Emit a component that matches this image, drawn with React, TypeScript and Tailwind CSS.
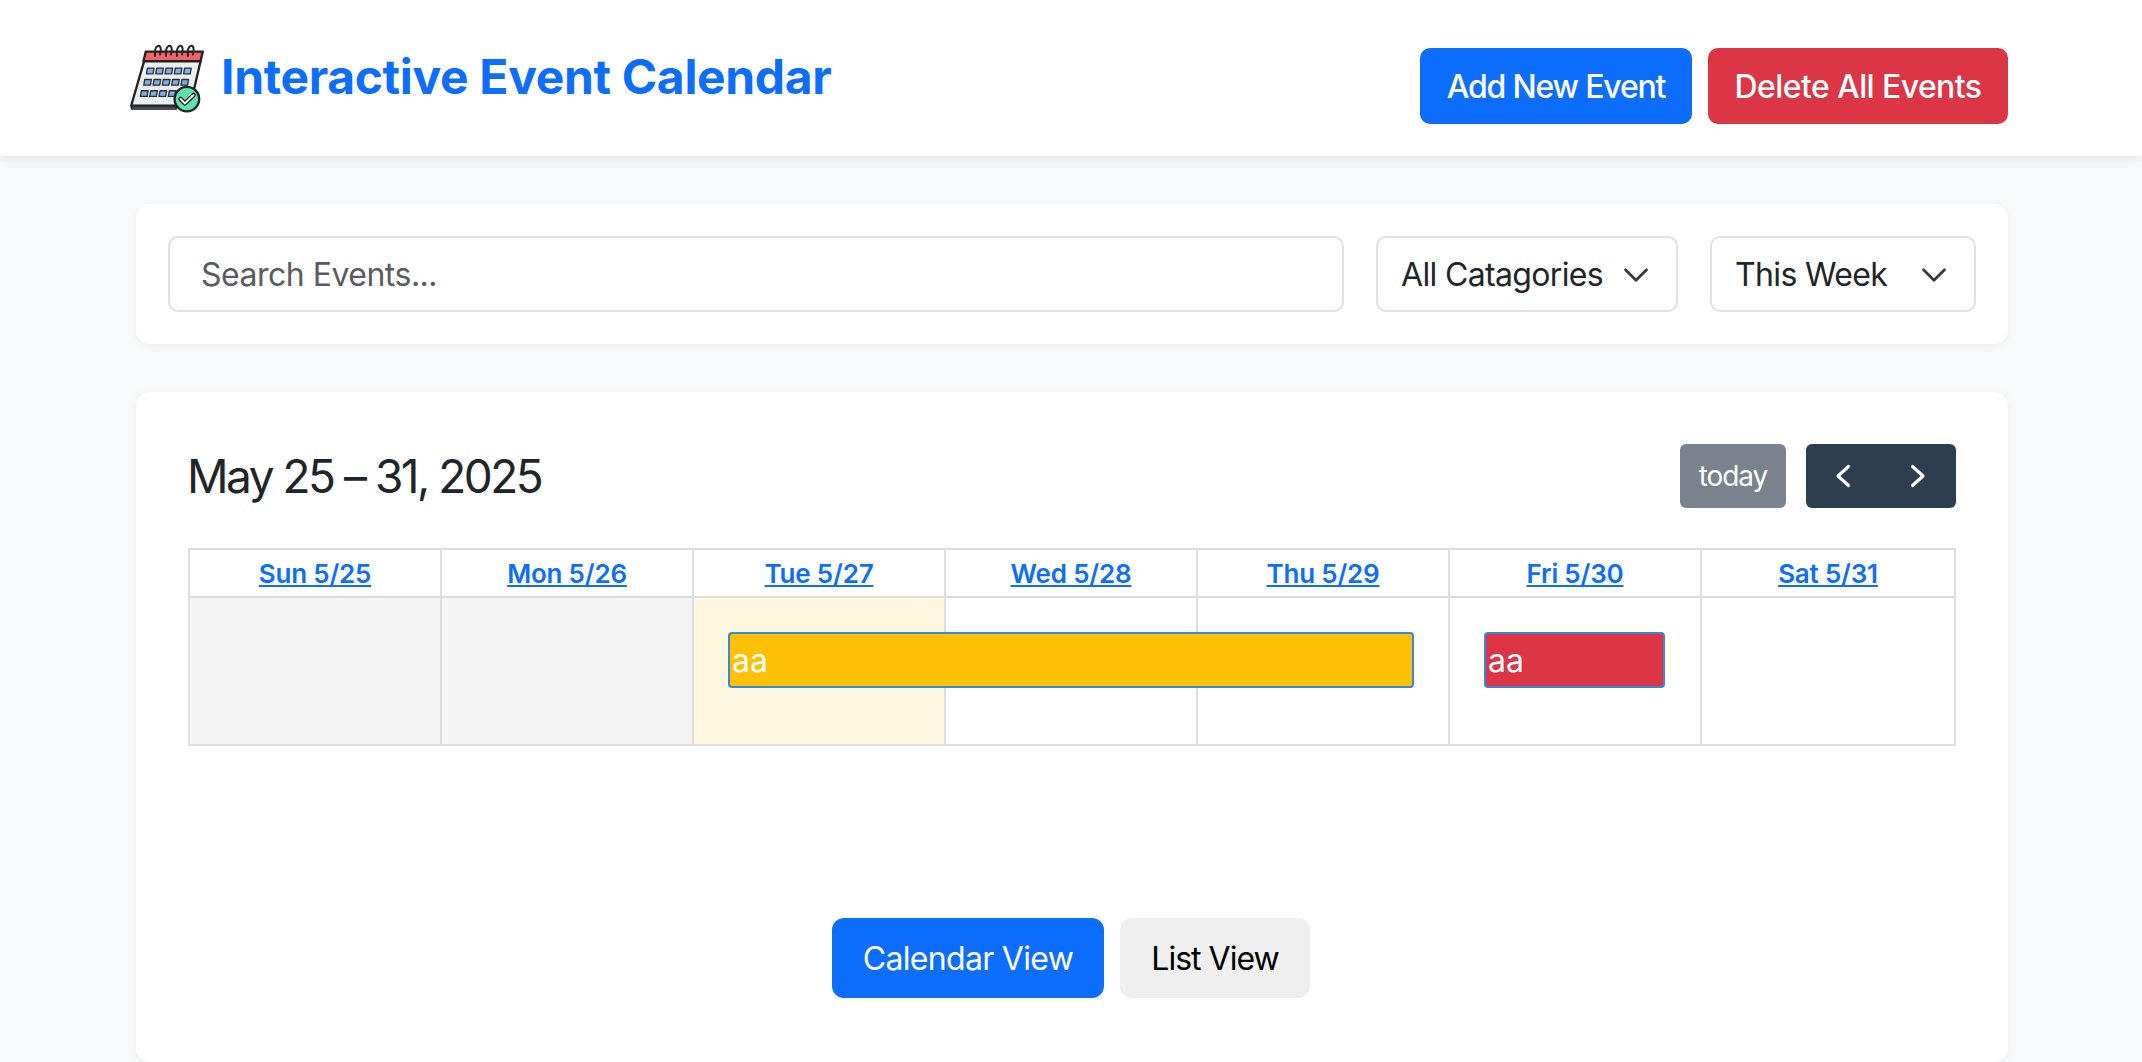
import { ChevronDown } from 'lucide-react'

const days = [
  { label: 'Sun 5/25', bg: 'bg-[#f5f5f5]' },
  { label: 'Mon 5/26', bg: 'bg-[#f5f5f5]' },
  { label: 'Tue 5/27', bg: 'bg-[#fff8e1]' },
  { label: 'Wed 5/28', bg: 'bg-white' },
  { label: 'Thu 5/29', bg: 'bg-white' },
  { label: 'Fri 5/30', bg: 'bg-white' },
  { label: 'Sat 5/31', bg: 'bg-white' },
]

// logo cells: row top y, first x, how many
const logoRows = [
  { y: 145, x: 108, n: 5, dx: 28 },
  { y: 179, x: 100, n: 5, dx: 28 },
  { y: 213, x: 90, n: 4, dx: 28 },
]

function CalendarLogo() {
  return (
    <svg viewBox="50 60 240 220" className="h-[73px] w-[80px] shrink-0">
      <path d="M62 262 L198 262 L198 268 L64 268 Z" fill="#a9b1b7" stroke="#222" strokeWidth="5" strokeLinejoin="round" />
      <path d="M102 120 L272 120 L240 258 L62 258 Z" fill="#eceff1" stroke="#222" strokeWidth="7" strokeLinejoin="round" />
      <path d="M106 95 L278 95 L271 124 L99 124 Z" fill="#f2626b" stroke="#222" strokeWidth="7" strokeLinejoin="round" />
      {[134, 167, 200, 233].map((x) => (
        <path key={x} d={`M${x} 108 C${x - 3} 70 ${x + 20} 70 ${x + 17} 92 L${x + 15} 104`} fill="none" stroke="#222" strokeWidth="6" strokeLinecap="round" />
      ))}
      {logoRows.map((r) =>
        Array.from({ length: r.n }).map((_, i) => (
          <path
            key={`${r.y}-${i}`}
            d={`M${r.x + i * r.dx + 3} ${r.y} h20 l-3 17 h-20 Z`}
            fill="#7ab0e6"
            stroke="#2b2f33"
            strokeWidth="4"
            strokeLinejoin="round"
          />
        )),
      )}
      <circle cx="230" cy="238" r="37" fill="#5fe3ae" stroke="#222" strokeWidth="7" />
      <path d="M211 238 L224 251 L250 226" fill="none" stroke="#222" strokeWidth="14" strokeLinecap="round" strokeLinejoin="round" />
      <path d="M211 238 L224 251 L250 226" fill="none" stroke="#fff" strokeWidth="6" strokeLinecap="round" strokeLinejoin="round" />
    </svg>
  )
}

function NavChevron({ d }: { d: string }) {
  return (
    <div className="flex flex-1 items-center justify-center pr-[2px]">
      <svg viewBox="0 0 16 24" className="h-[24px] w-[16px]">
        <path d={d} fill="none" stroke="#fff" strokeWidth="3.2" strokeLinecap="round" strokeLinejoin="round" />
      </svg>
    </div>
  )
}

function FilterSelect({ label, width }: { label: string; width: string }) {
  return (
    <div className={`flex h-[76px] ${width} items-center justify-between rounded-[10px] border-2 border-[#dee2e6] bg-white pt-[2px] pl-[23px] pr-[19px] text-[32px] tracking-[-0.65px] text-[#212529]`}>
      <span>{label}</span>
      <ChevronDown className="h-[42px] w-[42px] text-[#343a40]" strokeWidth={1.6} />
    </div>
  )
}

export default function App() {
  return (
    <div className="min-h-[1062px] overflow-hidden bg-[#f8f9fa] font-['Inter',sans-serif]">
      <header className="flex h-[156px] items-start justify-between bg-white pl-[127px] pr-[134px] shadow-[0_2px_10px_rgba(0,0,0,0.1)]">
        <div className="flex items-start gap-[14px] pt-[40px]">
          <CalendarLogo />
          <h1 className="mt-[1px] text-[48px] leading-[72px] font-bold tracking-[-0.35px] text-[#0d6efd]">Interactive Event Calendar</h1>
        </div>
        <div className="flex gap-[16px] pt-[48px]">
          <button className="h-[76px] w-[272px] rounded-[10px] bg-[#0d6efd] pt-[2px] text-[32px] font-medium tracking-[-1.2px] text-white">Add New Event</button>
          <button className="h-[76px] w-[300px] rounded-[10px] bg-[#dc3545] pt-[2px] text-[32px] font-medium tracking-[-0.6px] text-white">Delete All Events</button>
        </div>
      </header>

      <main className="mr-[134px] ml-[136px] flex flex-col gap-[48px] pt-[48px]">
        <section className="flex gap-[32px] rounded-[14px] bg-white p-[32px] shadow-[0_2px_10px_rgba(0,0,0,0.05)]">
          <div className="flex h-[76px] flex-1 items-center rounded-[10px] border-2 border-[#dee2e6] pt-[2px] pl-[31px] text-[32px] tracking-[-0.5px] text-[#595c5f]">Search Events...</div>
          <FilterSelect label="All Catagories" width="w-[302px]" />
          <FilterSelect label="This Week" width="w-[266px]" />
        </section>

        <section className="h-[670px] rounded-[14px] bg-white px-[52px] pt-[52px] shadow-[0_2px_10px_rgba(0,0,0,0.05)]">
          <div className="flex h-[64px] items-center justify-between">
            <h2 className="-ml-[1px] text-[46px] tracking-[-2.5px] text-[#212529]">May 25 – 31, 2025</h2>
            <div className="flex gap-[20px]">
              <button className="h-[64px] w-[106px] rounded-[6px] bg-[#7a828e] text-[28px] tracking-[-1.1px] text-white">today</button>
              <div className="flex h-[64px] w-[150px] items-center rounded-[6px] bg-[#2c3e50]">
                <NavChevron d="M13.5 2.5 L3 12 L13.5 21.5" />
                <NavChevron d="M2.5 2.5 L13 12 L2.5 21.5" />
              </div>
            </div>
          </div>

          <div className="mt-[40px] border-2 border-[#ddd]">
            <div className="grid h-[48px] grid-cols-7 border-b-2 border-[#ddd]">
              {days.map((d, i) => (
                <div key={d.label} className={`flex items-center justify-center ${i < 6 ? 'border-r-2 border-[#ddd]' : ''}`}>
                  <span className="text-[26px] font-semibold tracking-[-0.2px] text-[#0d6efd] underline">{d.label}</span>
                </div>
              ))}
            </div>
            <div className="relative grid h-[146px] grid-cols-7">
              {days.map((d, i) => (
                <div key={d.label} className={`${d.bg} ${i < 6 ? 'border-r-2 border-[#ddd]' : ''}`} />
              ))}
              <div className="absolute top-[34px] left-[538px] flex h-[56px] w-[686px] items-center rounded-[4px] border-2 border-[#3788d8] bg-[#ffc107] px-[2px] pt-[2px] text-[32px] text-white">aa</div>
              <div className="absolute top-[34px] left-[1294px] flex h-[56px] w-[181px] items-center rounded-[4px] border-2 border-[#3788d8] bg-[#dc3545] px-[2px] pt-[2px] text-[32px] text-white">aa</div>
            </div>
          </div>

          <div className="mt-[172px] flex justify-center gap-[16px] pr-[2px]">
            <button className="h-[80px] w-[272px] rounded-[12px] bg-[#0d6efd] pt-[2px] text-[32px] tracking-[-0.7px] text-white">Calendar View</button>
            <button className="h-[80px] w-[190px] rounded-[12px] bg-[#efefef] pt-[2px] text-[32px] tracking-[-1px] text-black">List View</button>
          </div>
        </section>
      </main>
    </div>
  )
}
